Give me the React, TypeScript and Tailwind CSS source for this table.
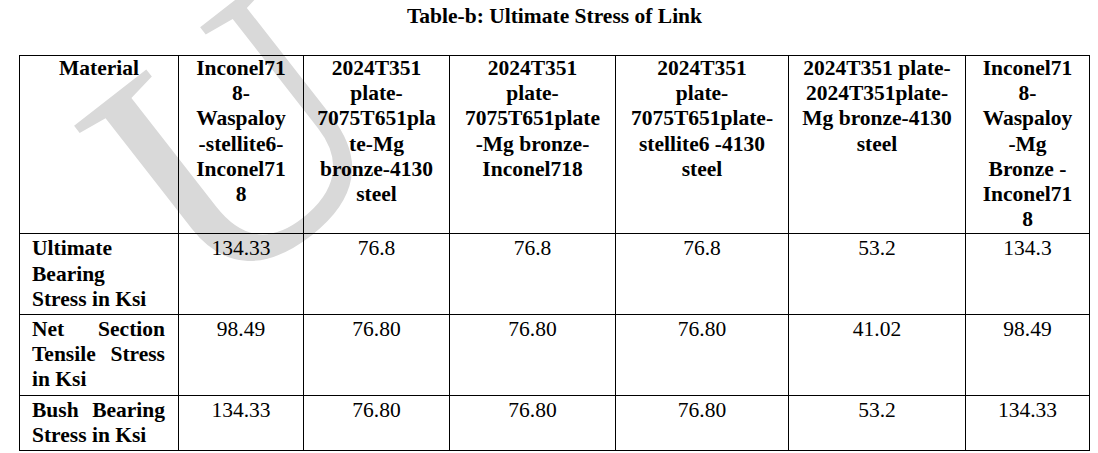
const headers: string[][] = [
  ['Material'],
  ['Inconel71', '8-', 'Waspaloy', '-stellite6-', 'Inconel71', '8'],
  ['2024T351', 'plate-', '7075T651pla', 'te-Mg', 'bronze-4130', 'steel'],
  ['2024T351', 'plate-', '7075T651plate', '-Mg bronze-', 'Inconel718'],
  ['2024T351', 'plate-', '7075T651plate-', 'stellite6 -4130', 'steel'],
  ['2024T351 plate-', '2024T351plate-', 'Mg bronze-4130', 'steel'],
  ['Inconel71', '8-', 'Waspaloy', '-Mg', 'Bronze -', 'Inconel71', '8'],
];

// each label line: [text, justified?]
const rows: { label: [string, boolean][]; values: string[] }[] = [
  {
    label: [['Ultimate', false], ['Bearing', false], ['Stress in Ksi', false]],
    values: ['134.33', '76.8', '76.8', '76.8', '53.2', '134.3'],
  },
  {
    label: [['Net Section', true], ['Tensile Stress', true], ['in Ksi', false]],
    values: ['98.49', '76.80', '76.80', '76.80', '41.02', '98.49'],
  },
  {
    label: [['Bush Bearing', true], ['Stress in Ksi', false]],
    values: ['134.33', '76.80', '76.80', '76.80', '53.2', '134.33'],
  },
];

const widths = ['w-[159px]', 'w-[125px]', 'w-[146px]', 'w-[166px]', 'w-[173px]', 'w-[177px]', 'w-[124px]'];

export default function App() {
  return (
    <div className="relative w-[1098px] h-[453px] overflow-hidden bg-white text-black [font-family:'Liberation_Serif',serif] text-[21.5px]">
      {/* watermark */}
      <span
        aria-hidden="true"
        className="pointer-events-none select-none absolute left-[29px] top-[80px] origin-top-left -rotate-[38deg] whitespace-nowrap text-[350px] leading-none text-[#d9d9d9]"
      >
        U
      </span>

      <div className="relative ml-[19px] w-[1071px] pt-[4px]">
        <div className="h-[25px] leading-[25px] text-center font-bold">Table-b: Ultimate Stress of Link</div>

        <table className="mt-[26px] w-[1071px] table-fixed border-collapse">
          <colgroup>
            {widths.map((w, i) => (
              <col key={i} className={w} />
            ))}
          </colgroup>
          <thead>
            <tr>
              {headers.map((lines, i) => (
                <th key={i} className="border border-black align-top p-0 pb-px text-center font-bold leading-[25.2px]">
                  {lines.map((l, j) => (
                    <div key={j} className="whitespace-pre">{l}</div>
                  ))}
                </th>
              ))}
            </tr>
          </thead>
          <tbody>
            {rows.map((r, i) => (
              <tr key={i}>
                <td className="border border-black align-top pl-[12px] pr-[13px] pt-[2px] pb-[2px] font-bold leading-[25.2px]">
                  {r.label.map(([t, j], k) => (
                    <div key={k} className={j ? 'text-justify [text-align-last:justify]' : 'text-left'}>
                      {t}
                    </div>
                  ))}
                </td>
                {r.values.map((v, k) => (
                  <td key={k} className="border border-black align-top p-0 pt-[2px] pb-[2px] text-center leading-[25.2px]">
                    {v}
                  </td>
                ))}
              </tr>
            ))}
          </tbody>
        </table>
      </div>
    </div>
  );
}
